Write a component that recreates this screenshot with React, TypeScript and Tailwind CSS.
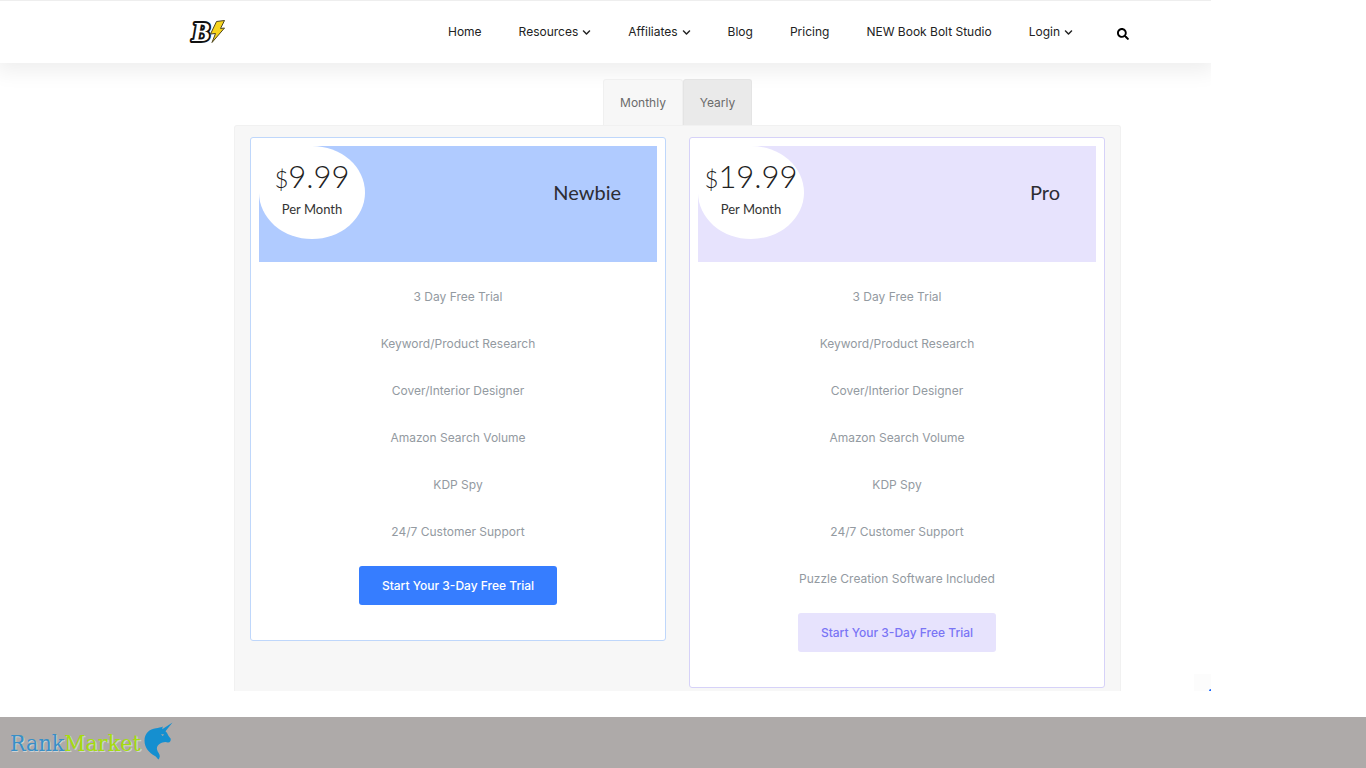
import { FaChevronDown, FaSearch } from "react-icons/fa";

type NavItem = { label: string; menu?: boolean };

const navItems: NavItem[] = [
  { label: "Home" },
  { label: "Resources", menu: true },
  { label: "Affiliates", menu: true },
  { label: "Blog" },
  { label: "Pricing" },
  { label: "NEW Book Bolt Studio" },
  { label: "Login", menu: true },
];

const baseFeatures = [
  "3 Day Free Trial",
  "Keyword/Product Research",
  "Cover/Interior Designer",
  "Amazon Search Volume",
  "KDP Spy",
  "24/7 Customer Support",
];

type Plan = {
  name: string;
  price: string;
  features: string[];
  border: string;
  banner: string;
  button: string;
};

const plans: Plan[] = [
  {
    name: "Newbie",
    price: "9.99",
    features: baseFeatures,
    border: "border-[#bfd7fb]",
    banner: "bg-[#b0cbff]",
    button: "bg-[#367dff] text-white",
  },
  {
    name: "Pro",
    price: "19.99",
    features: [...baseFeatures, "Puzzle Creation Software Included"],
    border: "border-[#d6d2f8]",
    banner: "bg-[#e7e3fd]",
    button: "bg-[#e7e3fd] text-[#7a75f5]",
  },
];

function BoltLogo() {
  return (
    <svg width="38" height="38" viewBox="0 -6 38 38" className="overflow-visible" role="img" aria-label="Book Bolt">
      <text
        x="4"
        y="22"
        fontFamily="'Liberation Serif', serif"
        fontWeight="700"
        fontStyle="italic"
        fontSize="27"
        fill="#fff"
        stroke="#111"
        strokeWidth="4"
        strokeLinejoin="round"
        paintOrder="stroke"
      >
        B
      </text>
      <path
        d="M28.5 2.5 36.5 1.5 32.5 9.5 36.5 9 24 23.5 27.5 14.5 22.5 15Z"
        fill="#f7d51d"
        stroke="#4d4520"
        strokeWidth="1"
        strokeLinejoin="round"
      />
    </svg>
  );
}

function Unicorn() {
  return (
    <svg width="30" height="38" viewBox="0 0 30 38" fill="#158fd0" aria-hidden="true">
      <path d="M28.5 0.5 21.5 9.2C23.5 10.8 23.6 13 26.6 16.6C27.2 18.6 26 20.8 23.8 20.6C22.6 19.9 20.5 19.8 18.5 20.6C14.5 22 12.5 24.2 13 27.5C13.6 30.2 16 32 15.8 34.5L14.8 37.6C13 36.8 12.6 35 11 34C5 30.6 0.5 26 0.5 18.5C0.5 11.5 5.5 6.8 12 6.2C14.5 6 16.5 5.6 18.8 4.6L18.2 7.2Z" />
      <path d="M17 12.2 20.2 12.6 18.6 14Z" fill="#aeaaa9" />
    </svg>
  );
}

function PlanCard({ plan }: { plan: Plan }) {
  return (
    <article className={`flex flex-col rounded-[3px] border bg-white p-2 pb-[35px] ${plan.border}`}>
      <header className={`flex h-[116px] items-start justify-between ${plan.banner}`}>
        <div className="flex h-[93px] w-[106px] flex-col items-center rounded-[50%] rounded-tl-none bg-white pt-3 text-[#222]">
          <p className="font-['Lato'] text-[31px] leading-9 font-light whitespace-nowrap">
            <span className="text-[24px]">$</span>
            {plan.price}
          </p>
          <p className="mt-1 font-['Lato'] text-[13px] leading-4 text-[#333]">Per Month</p>
        </div>
        <h2 className="mt-8 mr-9 font-['Lato'] text-[20px] leading-7 text-[#2d2d33]">{plan.name}</h2>
      </header>
      <ul className="mt-3 text-center text-[12px] text-[#939aa1]">
        {plan.features.map((feature) => (
          <li key={feature} className="flex h-[47px] items-center justify-center pb-[2px]">
            {feature}
          </li>
        ))}
      </ul>
      <button
        type="button"
        className={`mt-[10px] h-[39px] self-center rounded-[3px] px-[23px] text-[12px] font-medium ${plan.button}`}
      >
        Start Your 3-Day Free Trial
      </button>
    </article>
  );
}

export default function App() {
  return (
    <div className="flex min-h-screen flex-col bg-white font-['Inter','Noto_Sans',sans-serif]">
      <div className="relative mr-[155px] overflow-hidden">
        <header className="flex h-[63px] items-center border-t border-[#eeeeee] bg-white pr-[82px] pl-[188px] shadow-[0_4px_20px_4px_rgba(0,0,0,0.07)]">
          <a href="#home" className="mr-auto">
            <BoltLogo />
          </a>
          <nav className="flex gap-[37px] text-[12px] text-[#222]">
            {navItems.map((item) => (
              <a key={item.label} href="#" className="flex items-center gap-1 whitespace-nowrap">
                {item.label}
                {item.menu && <FaChevronDown className="size-[9px]" />}
              </a>
            ))}
          </nav>
          <button type="button" aria-label="Search" className="mt-1 ml-11 text-black">
            <FaSearch className="size-3" />
          </button>
        </header>

        <main className="pt-4 pr-[90px] pl-[234px]">
          <div role="tablist" className="flex justify-center text-[12px] text-[#6b6b6b]">
            <button
              type="button"
              role="tab"
              aria-selected="true"
              className="h-[46px] w-20 rounded-t-[3px] border border-b-0 border-[#f0f0f0] bg-[#f7f7f7]"
            >
              Monthly
            </button>
            <button
              type="button"
              role="tab"
              aria-selected="false"
              className="h-[46px] w-[69px] rounded-t-[3px] border border-b-0 border-[#e4e4e4] bg-[#eaeaea]"
            >
              Yearly
            </button>
          </div>
          <section className="grid grid-cols-2 items-start gap-[23px] rounded-t-[3px] border border-b-0 border-[#f1f1f1] bg-[#f7f7f7] px-[15px] pt-[11px] pb-[3px]">
            {plans.map((plan) => (
              <PlanCard key={plan.name} plan={plan} />
            ))}
          </section>
        </main>

        <div className="absolute right-0 bottom-0 size-[17px] overflow-hidden bg-[#fcfcfc]">
          <span className="absolute right-0 bottom-0 size-[2px] rounded-tl-full bg-[#1464ff]" />
        </div>
      </div>

      <footer className="mt-auto flex h-[51px] items-center bg-[#aeaaa9] pl-[10px]">
        <a
          href="#rankmarket"
          className="flex items-center font-['DejaVu_Serif_Condensed','DejaVu_Serif',serif] text-[23px] leading-8 [text-shadow:1px_1px_0_#d0d2d3]"
        >
          <span className="text-[#398fc6]">Rank</span>
          <span className="text-[#a6dc10]">Market</span>
          <span className="pb-[3px] pl-[3px]">
            <Unicorn />
          </span>
        </a>
      </footer>
    </div>
  );
}
